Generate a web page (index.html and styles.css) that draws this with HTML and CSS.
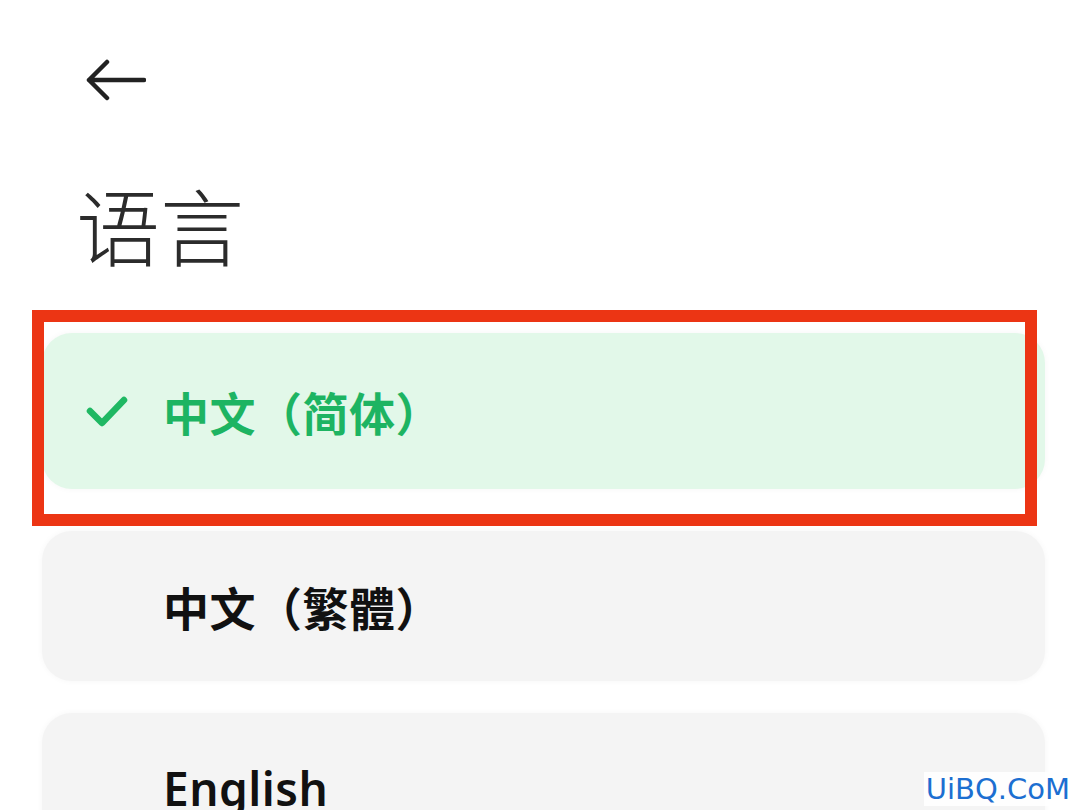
FILE: index.html
```html
<!DOCTYPE html>
<html lang="zh-CN">
  <head>
    <meta charset="UTF-8">
    <meta name="viewport" content="width=device-width, initial-scale=1.0">
    <title>语言</title>
    <link rel="stylesheet" href="styles.css">
  </head>
  <body>
    <div class="page">
        <div class="topbar">
            <svg class="back" width="60" height="50" viewBox="0 0 60 50">
                <path d="M3 24 H58 M21 6 L3 24 L21 42" fill="none" stroke="#222" stroke-width="4.5" stroke-linecap="round" stroke-linejoin="round"/>
            </svg>
        </div>

        <h1 class="title">语言</h1>

        <div class="list">
            <div class="item selected">
                <svg class="check" width="42" height="34" viewBox="0 0 42 34">
                    <path d="M4 16 L16 28 L38 5" fill="none" stroke="#1fb863" stroke-width="6.5" stroke-linecap="round" stroke-linejoin="round"/>
                </svg>
                <span class="label">中文（简体）</span>
            </div>
            <div class="item">
                <span class="label">中文（繁體）</span>
            </div>
            <div class="item">
                <span class="label latin">English</span>
            </div>
        </div>

        <div class="mark"></div>
        <div class="watermark">UiBQ.CoM</div>
    </div>
  </body>
</html>
```

FILE: styles.css
```css
body {
    margin: 0;
    background: #ffffff;
    font-family: 'Noto Sans', 'Noto Sans CJK SC', sans-serif;
    overflow: hidden;
}
.page {
    position: relative;
    width: 1080px;
    height: 810px;
    overflow: hidden;
}
.topbar {
    padding: 56px 0 0 86px;
    height: 54px;
}
.back {
    display: block;
}
.title {
    margin: 64px 0 0 76px;
    font-family: 'Noto Sans CJK SC', sans-serif;
    font-size: 84px;
    font-weight: 300;
    line-height: 100px;
    color: #2b2b2b;
}
.list {
    margin: 59px 35px 0 42px;
    display: flex;
    flex-direction: column;
    gap: 32px;
}
.item {
    height: 150px;
    border-radius: 30px;
    background: #f4f4f4;
    box-shadow: 0 0 6px rgba(0, 0, 0, 0.04);
    display: flex;
    align-items: center;
    padding-left: 121px;
    position: relative;
}
.item.selected {
    height: 156px;
    margin-bottom: 10px;
    background: #e2f8e9;
}
.check {
    position: absolute;
    left: 44px;
    top: 62px;
}
.label {
    font-family: 'Noto Sans CJK SC', sans-serif;
    font-size: 46px;
    font-weight: 700;
    color: #111;
    letter-spacing: 0.5px;
}
.selected .label {
    color: #1db462;
}
.label.latin {
    font-family: 'Noto Sans', sans-serif;
    font-weight: 600;
    letter-spacing: 0.5px;
}
.mark {
    position: absolute;
    left: 32px;
    top: 310px;
    width: 981px;
    height: 192px;
    border: 12px solid #ec3514;
}
.watermark {
    position: absolute;
    right: 8px;
    bottom: 4px;
    font-family: 'DejaVu Sans', sans-serif;
    font-size: 29px;
    color: #1c6fd1;
    background: rgba(255, 255, 255, 0.85);
    padding: 0 2px;
}
```
